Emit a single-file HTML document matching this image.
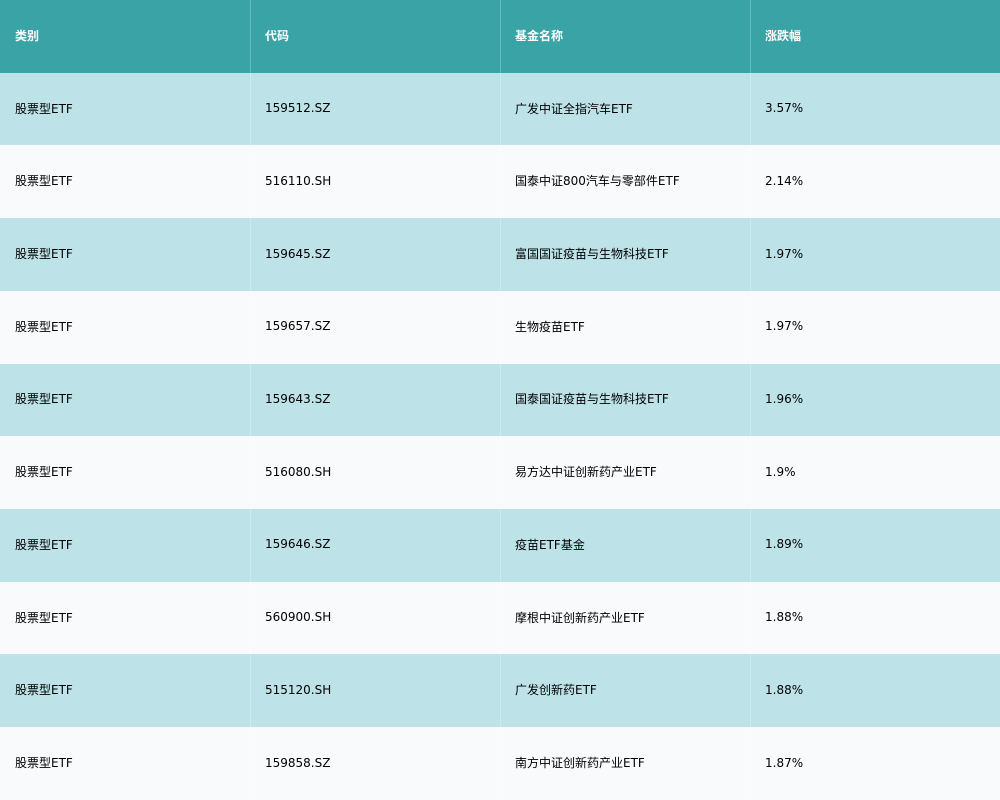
<!DOCTYPE html><html><head><meta charset="utf-8"><style>
body{margin:0;width:1000px;height:800px;overflow:hidden;font-family:"DejaVu Sans","Noto Sans CJK SC",sans-serif;font-size:12px;color:#000}
table{border-collapse:collapse;width:1000px;table-layout:fixed}
td{height:72.73px;padding:0 0 2px 15px;box-sizing:border-box;box-shadow:inset 1px 0 0 rgba(255,255,255,.25)}
td:first-child{box-shadow:none}
tr.h td{background:#3AA3A6;color:#fff;font-weight:bold}
tr.a td{background:#BDE3E9}
tr.b td{background:#F8FAFC}
</style></head><body><table>
<tr class="h"><td>类别</td><td>代码</td><td>基金名称</td><td>涨跌幅</td></tr>
<tr class="a"><td>股票型ETF</td><td>159512.SZ</td><td>广发中证全指汽车ETF</td><td>3.57%</td></tr>
<tr class="b"><td>股票型ETF</td><td>516110.SH</td><td>国泰中证800汽车与零部件ETF</td><td>2.14%</td></tr>
<tr class="a"><td>股票型ETF</td><td>159645.SZ</td><td>富国国证疫苗与生物科技ETF</td><td>1.97%</td></tr>
<tr class="b"><td>股票型ETF</td><td>159657.SZ</td><td>生物疫苗ETF</td><td>1.97%</td></tr>
<tr class="a"><td>股票型ETF</td><td>159643.SZ</td><td>国泰国证疫苗与生物科技ETF</td><td>1.96%</td></tr>
<tr class="b"><td>股票型ETF</td><td>516080.SH</td><td>易方达中证创新药产业ETF</td><td>1.9%</td></tr>
<tr class="a"><td>股票型ETF</td><td>159646.SZ</td><td>疫苗ETF基金</td><td>1.89%</td></tr>
<tr class="b"><td>股票型ETF</td><td>560900.SH</td><td>摩根中证创新药产业ETF</td><td>1.88%</td></tr>
<tr class="a"><td>股票型ETF</td><td>515120.SH</td><td>广发创新药ETF</td><td>1.88%</td></tr>
<tr class="b"><td>股票型ETF</td><td>159858.SZ</td><td>南方中证创新药产业ETF</td><td>1.87%</td></tr>
</table></body></html>
